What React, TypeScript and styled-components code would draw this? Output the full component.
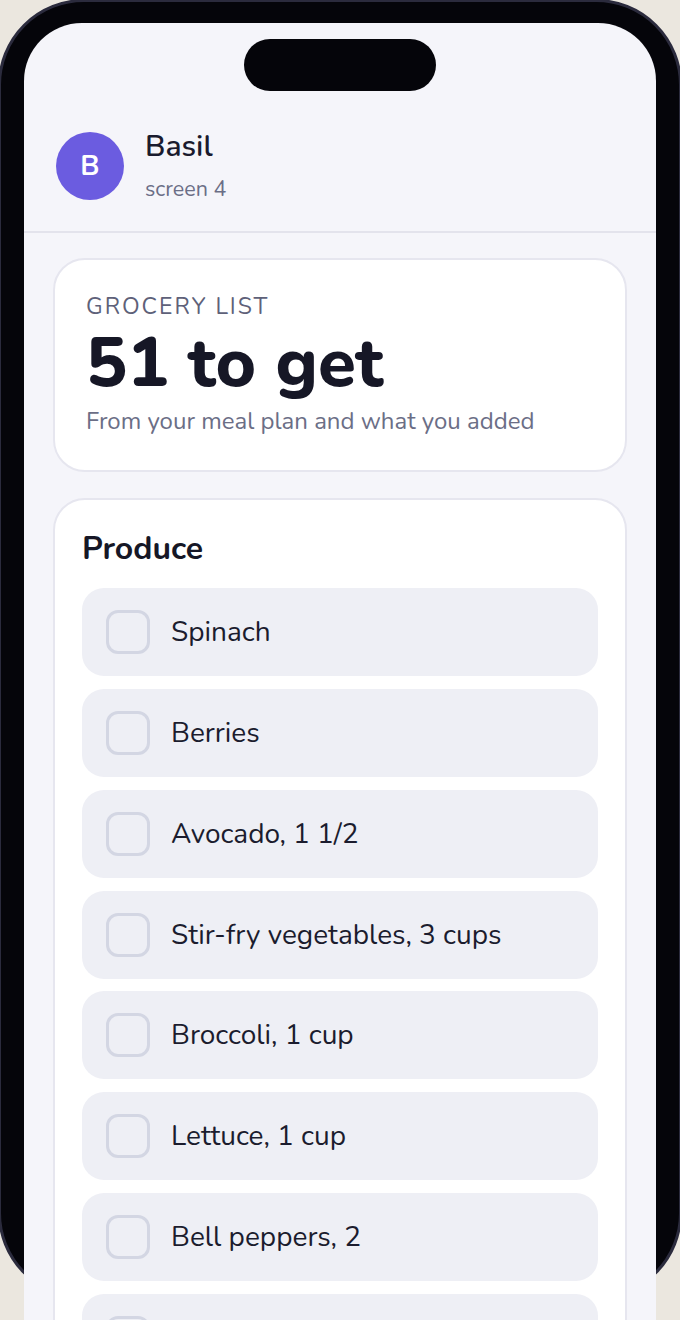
import React from "react";
import styled, { createGlobalStyle } from "styled-components";

const Global = createGlobalStyle`
  html, body { margin: 0; padding: 0; }
  body {
    background: #ebe7df;
    width: 680px;
    height: 1320px;
    overflow: hidden;
    font-family: "Nunito", "Lato", "Noto Sans", sans-serif;
    -webkit-font-smoothing: antialiased;
  }
`;

const Stage = styled.div`
  width: 680px;
  height: 1320px;
  overflow: hidden;
`;

const Phone = styled.div`
  box-sizing: border-box;
  width: 684px;
  height: 1300px;
  margin: -1px 0 0 -2px;
  padding: 21px 23px 0;
  background: #05050a;
  border: 3px solid #2b2b3d;
  border-radius: 86px;
`;

const Screen = styled.div`
  background: #f5f5fa;
  border-radius: 58px 58px 0 0;
  min-height: 1400px;
  padding-top: 16px;
`;

const Island = styled.div`
  width: 192px;
  height: 52px;
  margin: 0 auto;
  background: #05050a;
  border-radius: 26px;
`;

const Header = styled.header`
  display: flex;
  align-items: center;
  gap: 21px;
  padding: 38px 32px 29px;
  border-bottom: 2px solid #e3e3ec;
`;

const Avatar = styled.div`
  width: 68px;
  height: 68px;
  border-radius: 50%;
  background: #6b5ce0;
  color: #fff;
  display: flex;
  align-items: center;
  justify-content: center;
  font-size: 28px;
  font-weight: 700;
  flex-shrink: 0;
`;

const Who = styled.div`
  display: flex;
  flex-direction: column;
  gap: 11px;
`;

const Name = styled.div`
  font-size: 30px;
  font-weight: 600;
  color: #1a1b2e;
  line-height: 36px;
`;

const Sub = styled.div`
  font-size: 21.5px;
  color: #6b6e86;
  line-height: 26px;
`;

const Content = styled.main`
  display: flex;
  flex-direction: column;
  gap: 26px;
  padding: 25px 29px;
`;

const Card = styled.section<{ $pad: string }>`
  background: #fff;
  border: 2px solid #e6e6ef;
  border-radius: 32px;
  padding: ${(p) => p.$pad};
`;

const Eyebrow = styled.div`
  font-size: 23px;
  letter-spacing: 2px;
  color: #5e6179;
  line-height: 28px;
`;

const Big = styled.div`
  margin-top: 4px;
  font-size: 69px;
  font-weight: 800;
  color: #161726;
  line-height: 76px;
`;

const Note = styled.div`
  margin-top: 5px;
  font-size: 24px;
  color: #6b6e86;
  line-height: 30px;
`;

const SectionTitle = styled.h2`
  margin: 0 0 20px 0;
  font-size: 32px;
  font-weight: 700;
  color: #161726;
  line-height: 38px;
`;

const List = styled.ul`
  list-style: none;
  margin: 0;
  padding: 0;
  display: flex;
  flex-direction: column;
  gap: 12.86px;
`;

const Item = styled.li`
  display: flex;
  align-items: center;
  gap: 21px;
  height: 88px;
  box-sizing: border-box;
  padding: 0 24px;
  background: #eeeff5;
  border-radius: 22px;
`;

const Box = styled.span`
  box-sizing: border-box;
  width: 44px;
  height: 44px;
  border: 3px solid #d3d6e3;
  border-radius: 12px;
  flex-shrink: 0;
`;

const Label = styled.span`
  font-size: 28px;
  color: #1b1c2e;
`;

const items = [
  "Spinach",
  "Berries",
  "Avocado, 1 1/2",
  "Stir-fry vegetables, 3 cups",
  "Broccoli, 1 cup",
  "Lettuce, 1 cup",
  "Bell peppers, 2",
  "Tomatoes, 2",
];

export default function App() {
  return (
    <Stage>
      <Global />
      <Phone>
        <Screen>
          <Island />
          <Header>
            <Avatar>B</Avatar>
            <Who>
              <Name>Basil</Name>
              <Sub>screen 4</Sub>
            </Who>
          </Header>
          <Content>
            <Card $pad="33px 31px 34px 31px">
              <Eyebrow>GROCERY LIST</Eyebrow>
              <Big>51 to get</Big>
              <Note>From your meal plan and what you added</Note>
            </Card>
            <Card $pad="30px 27px">
              <SectionTitle>Produce</SectionTitle>
              <List>
                {items.map((t) => (
                  <Item key={t}>
                    <Box />
                    <Label>{t}</Label>
                  </Item>
                ))}
              </List>
            </Card>
          </Content>
        </Screen>
      </Phone>
    </Stage>
  );
}
